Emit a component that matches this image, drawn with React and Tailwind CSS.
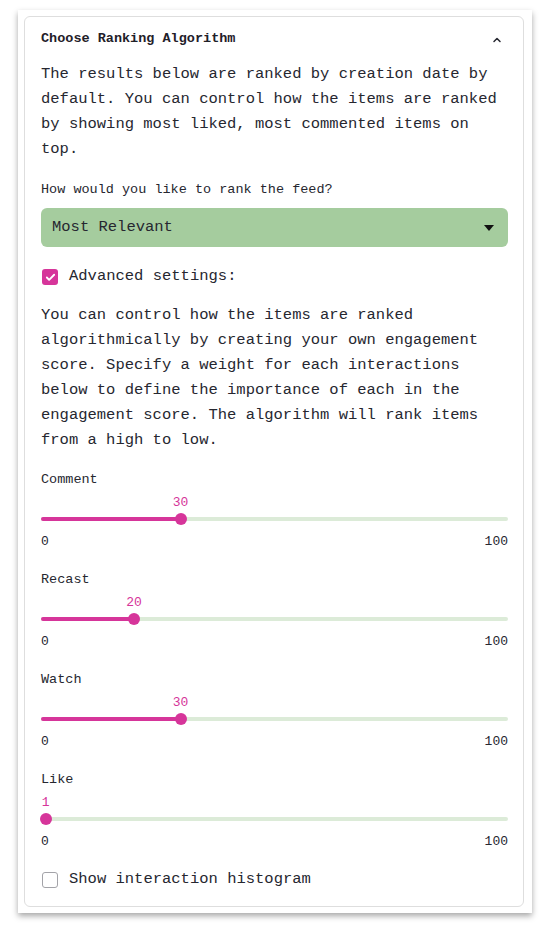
import React from 'react';

const sliders = [
  { label: 'Comment', value: 30 },
  { label: 'Recast', value: 20 },
  { label: 'Watch', value: 30 },
  { label: 'Like', value: 1 },
];

const mono = { fontFamily: '"Liberation Mono", "DejaVu Sans Mono", monospace' };

const Slider = ({ label, value }) => {
  const x = value * 4.65;
  return (
    <div className="flex flex-col mb-[20px]">
      <div className="h-[20px] flex items-center text-[13.5px] text-[#262730]">{label}</div>
      <div className="relative h-[44px]">
        <div
          className="absolute top-[5px] h-[16px] flex items-center text-[13px] text-[#d6359a] -translate-x-1/2"
          style={{ left: Math.max(x, 3) }}
        >
          {value}
        </div>
        <div className="absolute top-[27px] left-0 right-0 h-[4px] rounded-full bg-[#dcebd8]" />
        <div className="absolute top-[27px] left-0 h-[4px] rounded-full bg-[#d6359a]" style={{ width: x }} />
        <div
          className="absolute top-[23px] w-[12px] h-[12px] rounded-full bg-[#d6359a] -translate-x-1/2"
          style={{ left: x }}
        />
      </div>
      <div className="h-[16px] flex items-center justify-between text-[13px] text-[#262730]">
        <span>0</span>
        <span>100</span>
      </div>
    </div>
  );
};

const App = () => {
  return (
    <div className="w-[552px] h-[928px] bg-white pt-[10px] pl-[18px]" style={mono}>
      <div className="w-[514px] h-[903px] bg-white shadow-[0_3px_6px_rgba(0,0,0,0.35)] pt-[6px] pb-[6px] pl-[6px] pr-[8px]">
        <div className="h-full rounded-[6px] border border-[#dedede] pl-[16px] pr-[15px] flex flex-col">
          <div className="h-[45px] flex items-center justify-between">
            <span className="text-[13.5px] font-bold text-[#1f2029]">Choose Ranking Algorithm</span>
            <svg width="12" height="12" viewBox="0 0 24 24" fill="none" stroke="#262730" strokeWidth="3" strokeLinecap="round" strokeLinejoin="round" className="mr-[5px]">
              <path d="M6 15l6-6 6 6" />
            </svg>
          </div>

          <p className="text-[15.5px] leading-[25px] text-[#262730]">
            The results below are ranked by creation date by default. You can control how the items are ranked by showing most liked, most commented items on top.
          </p>

          <div className="mt-[18px] h-[20px] flex items-center text-[13.5px] text-[#262730]">
            How would you like to rank the feed?
          </div>

          <div className="mt-[8px] h-[39px] rounded-[6px] bg-[#a5cc9e] flex items-center justify-between pl-[11px] pr-[14px]">
            <span className="text-[15.5px] text-[#262730]">Most Relevant</span>
            <svg width="10" height="6" viewBox="0 0 10 6">
              <path d="M0 0h10L5 6z" fill="#111" />
            </svg>
          </div>

          <div className="mt-[18px] h-[24px] flex items-center gap-[11px]">
            <div className="ml-[1px] w-[16px] h-[16px] rounded-[3px] bg-[#d6359a] flex items-center justify-center">
              <svg width="11" height="11" viewBox="0 0 24 24" fill="none" stroke="white" strokeWidth="4" strokeLinecap="round" strokeLinejoin="round">
                <path d="M4 12l5 5 11-11" />
              </svg>
            </div>
            <span className="text-[15.5px] text-[#262730]">Advanced settings:</span>
          </div>

          <p className="mt-[14px] text-[15.5px] leading-[25px] text-[#262730]">
            You can control how the items are ranked algorithmically by creating your own engagement score. Specify a weight for each interactions below to define the importance of each in the engagement score. The algorithm will rank items from a high to low.
          </p>

          <div className="mt-[17px] flex flex-col">
            {sliders.map((s) => (
              <Slider key={s.label} label={s.label} value={s.value} />
            ))}
          </div>

          <div className="-mt-[2px] h-[24px] flex items-center gap-[11px]">
            <div className="ml-[1px] w-[16px] h-[16px] rounded-[3px] border border-[#a3a3a8] bg-white" />
            <span className="text-[15.5px] text-[#262730]">Show interaction histogram</span>
          </div>
        </div>
      </div>
    </div>
  );
};

export default App;
